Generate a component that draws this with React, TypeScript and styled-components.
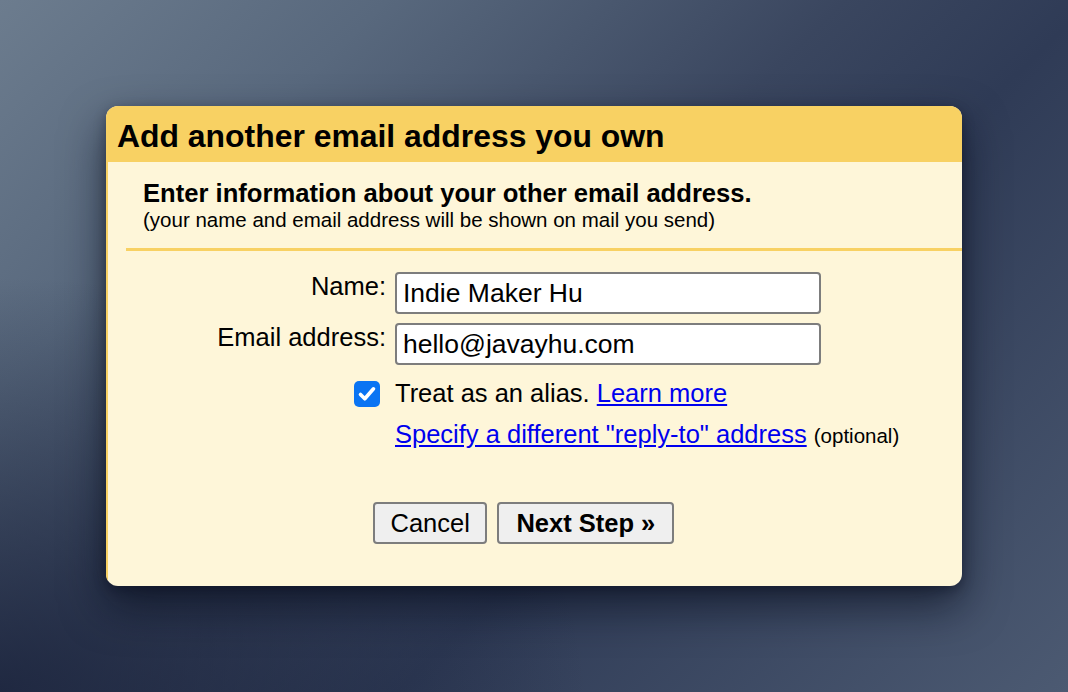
import styled, { createGlobalStyle } from "styled-components";

//GLOBAL
const GlobalStyle = createGlobalStyle`
  html, body {
    margin: 0;
    padding: 0;
  }
  body {
    font-family: "Liberation Sans", Arial, Helvetica, sans-serif;
    color: #000;
  }
`;

//REACT
const App = () => {
  return (
    <Page>
      <GlobalStyle />
      <Dialog>
        <Header>Add another email address you own</Header>

        <Body>
          <Intro>
            <h2>Enter information about your other email address.</h2>
            <p>(your name and email address will be shown on mail you send)</p>
          </Intro>

          <Divider />

          <FieldRow>
            <Label htmlFor="name">Name:</Label>
            <TextInput id="name" defaultValue="Indie Maker Hu" />
          </FieldRow>

          <FieldRow $top={9}>
            <Label htmlFor="email">Email address:</Label>
            <TextInput id="email" defaultValue="hello@javayhu.com" />
          </FieldRow>

          <FieldRow $top={14} $center>
            <Checkbox role="checkbox" aria-checked="true">
              <svg width="26" height="26" viewBox="0 0 26 26">
                <path
                  d="M6.5 13.5 L10.8 17.8 L19.5 7.8"
                  fill="none"
                  stroke="#fff"
                  strokeWidth="3.6"
                  strokeLinecap="round"
                  strokeLinejoin="round"
                />
              </svg>
            </Checkbox>
            <Text>
              Treat as an alias. <Link href="#">Learn more</Link>
            </Text>
          </FieldRow>

          <FieldRow $top={12}>
            <span />
            <Text>
              <Link href="#">Specify a different "reply-to" address</Link>{" "}
              <small>(optional)</small>
            </Text>
          </FieldRow>

          <Actions>
            <Button type="button">Cancel</Button>
            <Button type="button" $primary>
              Next Step »
            </Button>
          </Actions>
        </Body>
      </Dialog>
    </Page>
  );
};

//STYLED-COMPONENTS
const Page = styled.div`
  width: 100vw;
  height: 100vh;
  display: flex;
  align-items: center;
  justify-content: center;
  overflow: hidden;
  background:
    radial-gradient(ellipse 55% 60% at 0% 100%, rgba(22, 30, 55, 0.8), rgba(22, 30, 55, 0) 100%),
    linear-gradient(135deg, #6c7c8e 0%, #58687d 22%, #3a465f 48%, #2f3b56 62%, #4c5a72 100%);
`;

const Dialog = styled.div`
  width: 856px;
  height: 480px;
  display: flex;
  flex-direction: column;
  border-radius: 12px;
  overflow: hidden;
  background: #fef6d9;
  box-shadow: 0 20px 44px rgba(5, 10, 25, 0.6), 0 4px 12px rgba(5, 10, 25, 0.35);
`;

const Header = styled.div`
  height: 56px;
  box-sizing: border-box;
  flex-shrink: 0;
  display: flex;
  align-items: center;
  padding: 5px 0 0 11px;
  background: #f8d163;
  font-size: 31.9px;
  font-weight: 700;
`;

const Body = styled.div`
  flex: 1;
  border-left: 2px solid #f8d163;
`;

const Intro = styled.div`
  padding: 17px 0 0 35px;

  h2 {
    margin: 0;
    font-size: 25.6px;
    font-weight: 700;
    line-height: normal;
  }

  p {
    margin: 0;
    font-size: 20.5px;
    line-height: normal;
  }
`;

const Divider = styled.div`
  height: 3px;
  margin: 16px 0 0 18px;
  background: #f8d163;
`;

const FieldRow = styled.div<{ $top?: number; $center?: boolean }>`
  display: grid;
  grid-template-columns: 278px 426px;
  column-gap: 9px;
  align-items: ${(p) => (p.$center ? "center" : "start")};
  margin-top: ${(p) => (p.$top !== undefined ? p.$top : 21)}px;
`;

const Label = styled.label`
  justify-self: end;
  font-size: 25.5px;
  line-height: normal;
`;

const TextInput = styled.input`
  box-sizing: border-box;
  width: 426px;
  height: 42px;
  padding: 0 6px;
  border: 2px solid #7d7d7d;
  border-radius: 4px;
  background: #fff;
  font-family: inherit;
  font-size: 26.5px;
  color: #000;
  outline: none;
`;

const Checkbox = styled.span`
  justify-self: end;
  margin-right: 6px;
  width: 26px;
  height: 26px;
  border-radius: 5px;
  background: #0a74f3;
  display: flex;
  align-items: center;
  justify-content: center;
`;

const Text = styled.div`
  font-size: 25.5px;
  line-height: normal;
  white-space: nowrap;

  small {
    font-size: 20.5px;
  }
`;

const Link = styled.a`
  color: #0000ee;
  text-decoration: underline;
`;

const Actions = styled.div`
  display: flex;
  gap: 10px;
  margin: 53px 0 0 265px;
`;

const Button = styled.button<{ $primary?: boolean }>`
  height: 42px;
  padding: 0 ${(p) => (p.$primary ? 17 : 15.5)}px;
  border: 2px solid #7d7d7d;
  border-radius: 4px;
  background: #efefef;
  font-family: inherit;
  font-size: 25.5px;
  font-weight: ${(p) => (p.$primary ? 700 : 400)};
  color: #000;
  cursor: pointer;
`;

export default App;
